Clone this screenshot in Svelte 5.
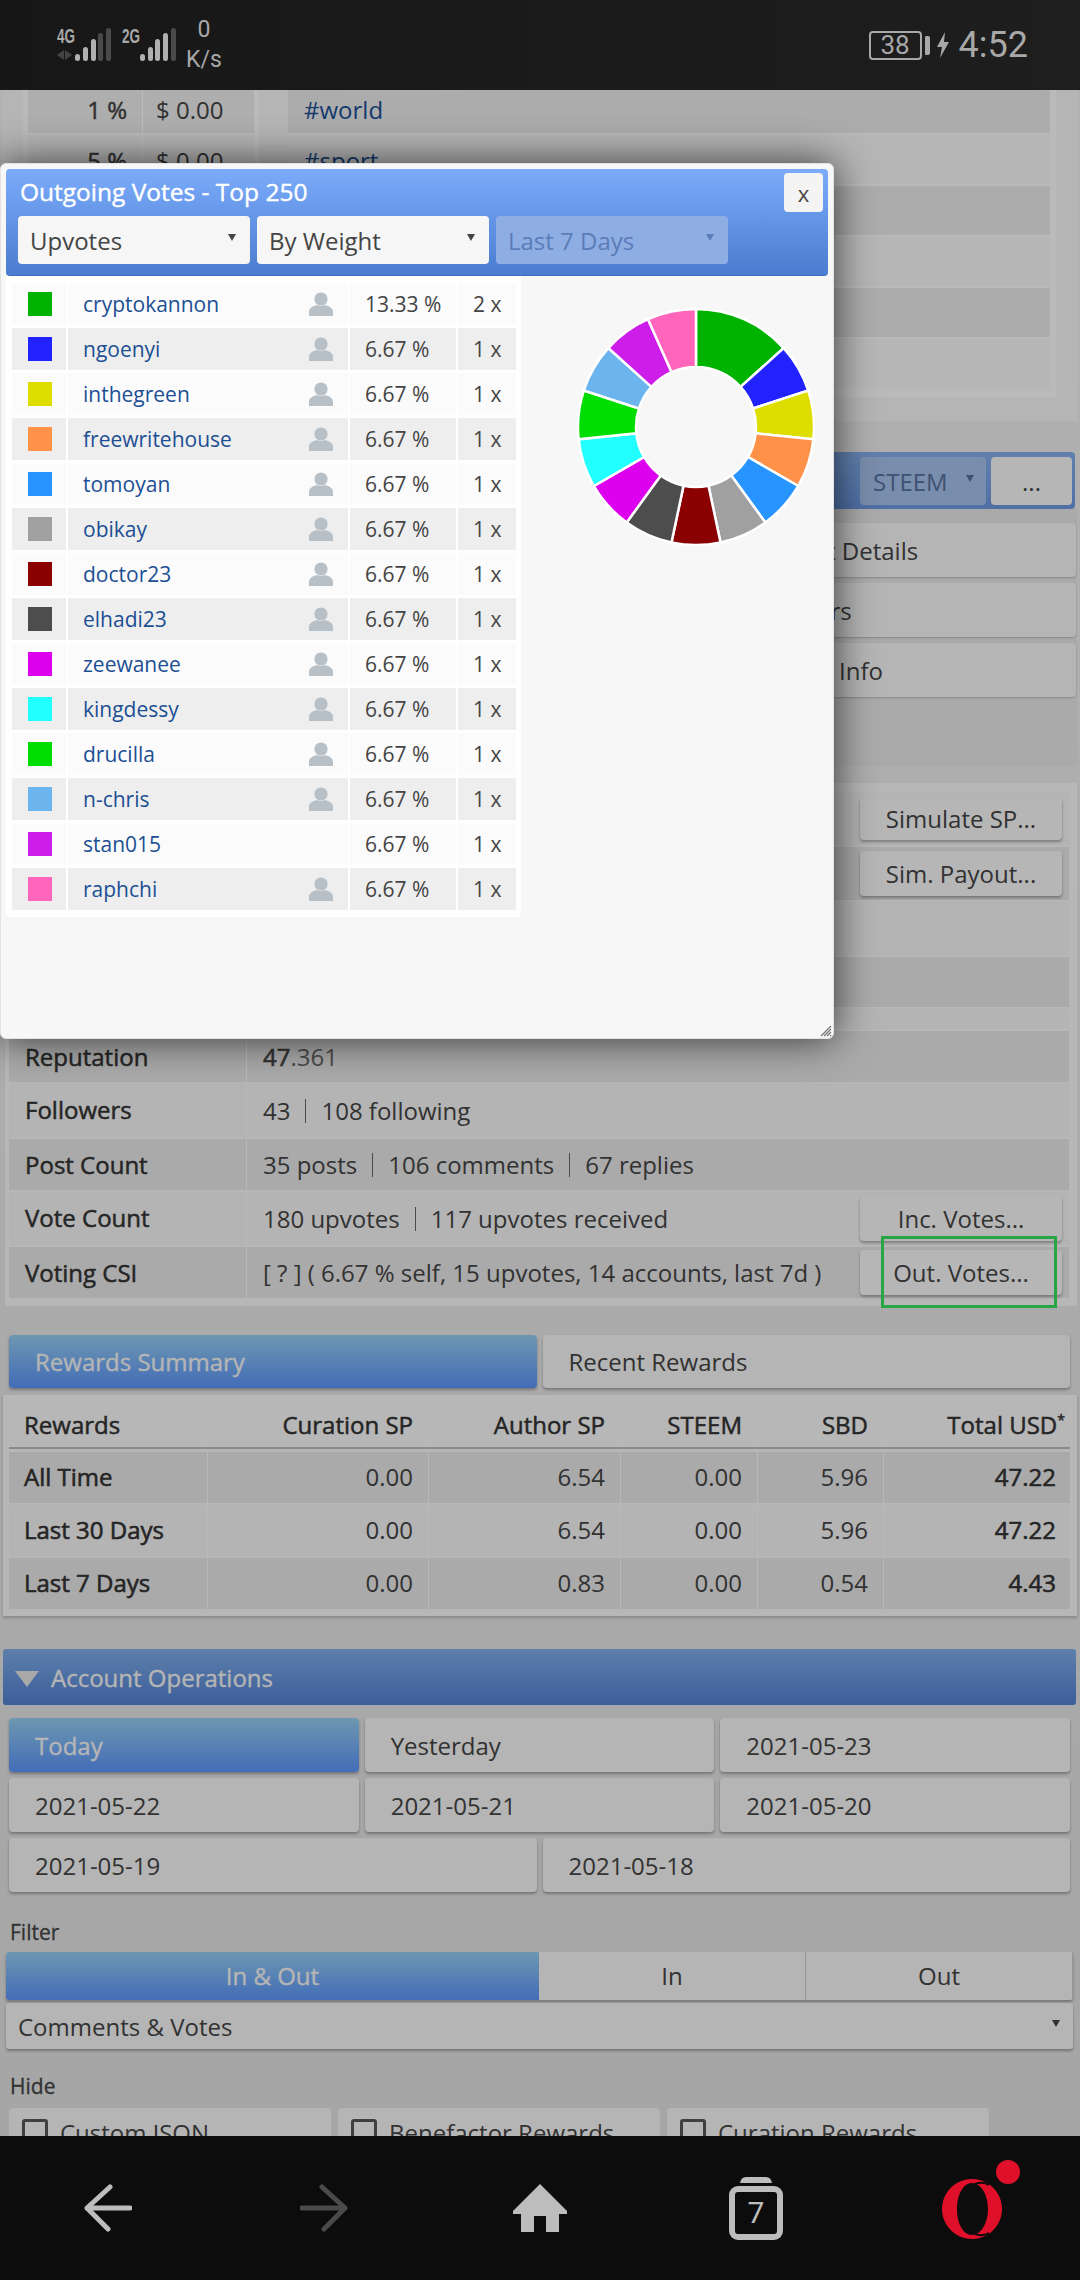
<script>
    const votes = [
        { name: 'cryptokannon', color: '#00b300', pct: '13.33 %', n: 2, user: true },
        { name: 'ngoenyi', color: '#2222ff', pct: '6.67 %', n: 1, user: true },
        { name: 'inthegreen', color: '#dddd00', pct: '6.67 %', n: 1, user: true },
        { name: 'freewritehouse', color: '#ff9148', pct: '6.67 %', n: 1, user: true },
        { name: 'tomoyan', color: '#2894ff', pct: '6.67 %', n: 1, user: true },
        { name: 'obikay', color: '#a0a0a0', pct: '6.67 %', n: 1, user: true },
        { name: 'doctor23', color: '#8b0000', pct: '6.67 %', n: 1, user: true },
        { name: 'elhadi23', color: '#4d4d4d', pct: '6.67 %', n: 1, user: true },
        { name: 'zeewanee', color: '#dd00ee', pct: '6.67 %', n: 1, user: true },
        { name: 'kingdessy', color: '#22ffff', pct: '6.67 %', n: 1, user: true },
        { name: 'drucilla', color: '#00dd00', pct: '6.67 %', n: 1, user: true },
        { name: 'n-chris', color: '#6cb4ee', pct: '6.67 %', n: 1, user: true },
        { name: 'stan015', color: '#cc1ee8', pct: '6.67 %', n: 1, user: false },
        { name: 'raphchi', color: '#ff66bb', pct: '6.67 %', n: 1, user: true }
    ];

    function slicePath(start, end) {
        const R = 118, r = 60, c = 120;
        const pt = (rad, deg) => {
            const a = (deg * Math.PI) / 180;
            return (c + rad * Math.sin(a)).toFixed(2) + ' ' + (c - rad * Math.cos(a)).toFixed(2);
        };
        return `M${pt(R, start)} A${R} ${R} 0 0 1 ${pt(R, end)} L${pt(r, end)} A${r} ${r} 0 0 0 ${pt(r, start)}Z`;
    }

    let acc = 0;
    const slices = votes.map((v) => {
        const start = acc;
        acc += v.n * 24;
        return { color: v.color, d: slicePath(start, acc) };
    });

    const tagRows = ['#world', '#sport', '', '', '', ''];
    const rewards = [
        ['All Time', '0.00', '6.54', '0.00', '5.96', '47.22'],
        ['Last 30 Days', '0.00', '6.54', '0.00', '5.96', '47.22'],
        ['Last 7 Days', '0.00', '0.83', '0.00', '0.54', '4.43']
    ];
    const days = ['Yesterday', '2021-05-23', '2021-05-22', '2021-05-21', '2021-05-20'];
</script>

<div class="screen">
    <header class="status">
        <svg class="signal" width="130" height="50" viewBox="0 0 130 50">
            <text x="0" y="22" class="net" textLength="18" lengthAdjust="spacingAndGlyphs">4G</text>
            <path d="M0 34l7-5v10zM8 29l7 5-7 5z" fill="#444" />
            <rect x="18" y="33" width="5" height="7" rx="2.5" fill="#b0b0b0" />
            <rect x="26" y="26" width="5" height="14" rx="2.5" fill="#b0b0b0" />
            <rect x="34" y="18" width="5" height="22" rx="2.5" fill="#b0b0b0" />
            <rect x="41" y="12" width="5" height="28" rx="2.5" fill="#4a4a4a" />
            <rect x="49" y="7" width="5" height="33" rx="2.5" fill="#4a4a4a" />
            <text x="65" y="22" class="net" textLength="18" lengthAdjust="spacingAndGlyphs">2G</text>
            <rect x="83" y="33" width="5" height="7" rx="2.5" fill="#b0b0b0" />
            <rect x="91" y="26" width="5" height="14" rx="2.5" fill="#b0b0b0" />
            <rect x="98" y="18" width="5" height="22" rx="2.5" fill="#b0b0b0" />
            <rect x="106" y="12" width="5" height="28" rx="2.5" fill="#b0b0b0" />
            <rect x="114" y="7" width="5" height="33" rx="2.5" fill="#4a4a4a" />
        </svg>
        <div class="speed"><span>0</span><span>K/s</span></div>
        <div class="battery"><span class="batt-cell">38</span><span class="tip"></span></div>
        <svg class="bolt" width="12" height="26" viewBox="0 0 12 26"><path d="M8 0L0 15h5L3 26l9-16H7z" fill="#a8a8a8" /></svg>
        <span class="clock">4:52</span>
    </header>

    <main class="page">
        <div class="scroll">
            <section class="top-panel">
                <div class="fee-table">
                    <div class="fee-row dark"><span class="fee-pct">1 %</span><span class="fee-val">$ 0.00</span></div>
                    <div class="fee-row"><span class="fee-pct">5 %</span><span class="fee-val">$ 0.00</span></div>
                </div>
                <div class="tag-panel">
                    {#each tagRows as tag, i}
                        <div class="tag-row" class:dark={i % 2 === 0}><span class="link">{tag}</span></div>
                    {/each}
                </div>
            </section>

            <div class="blue-bar">
                <span class="sel-dim">STEEM<i class="arrow"></i></span>
                <button class="more">...</button>
            </div>
            <section class="menu-panel">
                <button class="menu-btn">Account Details</button>
                <button class="menu-btn">Followers</button>
                <button class="menu-btn">Witness Info</button>
            </section>

            <section class="info-panel">
                <div class="info-row h53"><span class="lab"></span><div class="val"><button class="side s1">Simulate SP...</button></div></div>
                <div class="info-row h53 dark"><span class="lab"></span><div class="val"><button class="side s2">Sim. Payout...</button></div></div>
                <div class="info-row h53"><span class="lab"></span><div class="val"></div></div>
                <div class="info-row h50 dark"><span class="lab"></span><div class="val"></div></div>
                <div class="info-row h20"><span class="lab"></span><div class="val"></div></div>
                <div class="info-row h51 dark"><span class="lab">Reputation</span><div class="val"><b>47</b><span class="frac">.361</span></div></div>
                <div class="info-row h53"><span class="lab">Followers</span><div class="val">43<i class="sep"></i>108 following</div></div>
                <div class="info-row h51 dark"><span class="lab">Post Count</span><div class="val">35 posts<i class="sep"></i>106 comments<i class="sep"></i>67 replies</div></div>
                <div class="info-row h53"><span class="lab">Vote Count</span><div class="val">180 upvotes<i class="sep"></i>117 upvotes received<button class="side s3">Inc. Votes...</button></div></div>
                <div class="info-row h51 dark"><span class="lab">Voting CSI</span><div class="val">[ ? ] ( 6.67 % self, 15 upvotes, 14 accounts, last 7d )<button class="side s3">Out. Votes...</button></div></div>
            </section>

            <div class="tabs">
                <button class="btn active">Rewards Summary</button>
                <button class="btn">Recent Rewards</button>
            </div>

            <section class="reward-panel">
                <div class="rw head">
                    <span>Rewards</span><span>Curation SP</span><span>Author SP</span><span>STEEM</span><span>SBD</span><span>Total USD<sup>*</sup></span>
                </div>
                {#each rewards as row, i}
                    <div class="rw" class:dark={i !== 1}>
                        {#each row as cell, j}
                            <span class:strong={j === 0 || j === 5}>{cell}</span>
                        {/each}
                    </div>
                {/each}
            </section>

            <div class="ops-bar"><i class="tri"></i>Account Operations</div>

            <div class="days">
                <button class="btn active">Today</button>
                {#each days as d}<button class="btn">{d}</button>{/each}
            </div>
            <div class="days two">
                <button class="btn">2021-05-19</button>
                <button class="btn">2021-05-18</button>
            </div>

            <div class="cap filter">Filter</div>
            <div class="seg">
                <span class="seg-on">In &amp; Out</span><span>In</span><span>Out</span>
            </div>
            <div class="wide-select">Comments &amp; Votes<i class="arrow"></i></div>
            <div class="cap hide">Hide</div>
            <div class="checks">
                <div class="check"><i class="box"></i>Custom JSON</div>
                <div class="check"><i class="box"></i>Benefactor Rewards</div>
                <div class="check"><i class="box"></i>Curation Rewards</div>
            </div>
        </div>

        <div class="overlay"></div>
        <div class="mark"></div>

        <div class="modal">
            <div class="modal-head">
                <div class="title-row">
                    <span class="title">Outgoing Votes - Top 250</span>
                    <button class="close">x</button>
                </div>
                <div class="selects">
                    <span class="sel">Upvotes<i class="arrow"></i></span>
                    <span class="sel">By Weight<i class="arrow"></i></span>
                    <span class="sel off">Last 7 Days<i class="arrow"></i></span>
                </div>
            </div>
            <div class="modal-body">
                <div class="vote-table">
                    {#each votes as v, i}
                        <div class="vote-row" class:even={i % 2 === 1}>
                            <span class="cell swatch-cell"><i class="swatch" style="background:{v.color}"></i></span>
                            <span class="cell name-cell">
                                <span class="link">{v.name}</span>
                                {#if v.user}
                                    <svg class="person" width="24" height="24" viewBox="0 0 24 24">
                                        <circle cx="12" cy="7" r="6.6" fill="#b7bfc7" />
                                        <path d="M0 24v-4c0-4 4-6 8-7 2.400 1.200 5.600 1.200 8 0 4 1 8 3 8 7v4z" fill="#b7bfc7" />
                                    </svg>
                                {/if}
                            </span>
                            <span class="cell pct-cell">{v.pct}</span>
                            <span class="cell cnt-cell">{v.n} x</span>
                        </div>
                    {/each}
                </div>
                <svg class="donut" width="240" height="240" viewBox="0 0 240 240">
                    {#each slices as s}
                        <path d={s.d} fill={s.color} stroke="#fff" stroke-width="2.5" />
                    {/each}
                </svg>
            </div>
            <svg class="grip" width="12" height="12" viewBox="0 0 12 12">
                <path d="M1 11L11 1M4 11l7-7M7 11l4-4M10 11l1-1" stroke="#777" stroke-width="1.2" />
            </svg>
        </div>
    </main>

    <nav class="navbar">
        <div class="nav-item">
            <svg width="48" height="48" viewBox="0 0 48 48"><path d="M26 3L3 24l21 21M3 24h43" fill="none" stroke="#bdbdbd" stroke-width="5" stroke-linecap="round" stroke-linejoin="round" /></svg>
        </div>
        <div class="nav-item">
            <svg width="48" height="48" viewBox="0 0 48 48"><path d="M22 3l23 21-21 21M45 24H2" fill="none" stroke="#4a4a4a" stroke-width="5" stroke-linecap="round" stroke-linejoin="round" /></svg>
        </div>
        <div class="nav-item">
            <svg width="54" height="48" viewBox="0 0 54 48"><path d="M27 0L54 27 54 30H46V48H33V32H21V48H8V30H0V27z" fill="#bdbdbd" /></svg>
        </div>
        <div class="nav-item">
            <svg width="54" height="64" viewBox="0 0 54 64">
                <path d="M11 7q1-6 6-6h20q5 0 6 6z" fill="#bdbdbd" />
                <rect x="3" y="13" width="48" height="48" rx="6" fill="none" stroke="#bdbdbd" stroke-width="6" />
            </svg>
            <span class="tab-count">7</span>
        </div>
        <div class="nav-item">
            <svg class="opera" width="120" height="100" viewBox="0 0 120 100">
                <circle cx="96" cy="25" r="12" fill="#e0102a" />
                <path fill-rule="evenodd" fill="#e0102a" d="M60 32a30 30 0 1 0 .01 0zM60 36c-9 0-15 12-15 26s6 26 15 26 16-12 16-26-7-26-16-26z" />
                <path d="M63 37q8-3 14 1M63 87q8 3 14-1" fill="none" stroke="#0c0c0c" stroke-width="2" />
            </svg>
        </div>
    </nav>
</div>

<style>
    :global(body) {
        margin: 0;
        font-family: "Open Sans", "Liberation Sans", sans-serif;
        color: #444;
    }

    button {
        font: inherit;
        color: inherit;
        border: none;
        margin: 0;
    }

    i {
        font-style: normal;
    }

    .screen {
        width: 1080px;
        height: 2280px;
        display: flex;
        flex-direction: column;
        overflow: hidden;
    }

    /* status bar */
    .status {
        height: 90px;
        flex: none;
        display: flex;
        align-items: center;
        padding: 0 52px 0 57px;
        box-sizing: border-box;
        background: linear-gradient(90deg, #171717, #1e1e1e);
        color: #a8a8a8;
        font-family: Roboto, sans-serif;
    }

    .signal {
        margin-top: 2px;
        flex: none;
    }

    .net {
        font: 700 20px "Liberation Sans", sans-serif;
        fill: #a8a8a8;
    }

    .speed {
        display: flex;
        flex-direction: column;
        align-items: center;
        width: 40px;
        margin-left: -3px;
        font-size: 23px;
        line-height: 30px;
    }

    .battery {
        display: flex;
        align-items: center;
        margin-left: auto;
        gap: 3px;
    }

    .batt-cell {
        width: 49px;
        height: 25px;
        border: 2px solid #a8a8a8;
        border-radius: 4px;
        font-size: 26px;
        line-height: 25px;
        text-align: center;
    }

    .tip {
        width: 5px;
        height: 19px;
        background: #a8a8a8;
        border-radius: 1px 2px 2px 1px;
    }

    .bolt {
        margin: 0 10px 0 7px;
    }

    .clock {
        font-size: 36px;
        line-height: 40px;
    }

    /* page content */
    .page {
        position: relative;
        flex: none;
        height: 2046px;
        overflow: hidden;
        background: linear-gradient(#f0f0f0, #e0e0e0);
    }

    .scroll {
        margin-top: -6px;
        font-size: 24px;
    }

    .link {
        color: #1c4f94;
    }

    .top-panel {
        height: 337px;
        margin: 0 2px 0 3px;
        padding: 0 0 0 20px;
        background: #f4f4f4;
        display: flex;
        box-sizing: border-box;
    }

    .fee-table {
        width: 236px;
        height: 300px;
        padding: 0 5px;
        box-sizing: border-box;
        background: #fbfbfb;
    }

    .fee-row {
        height: 49px;
        margin-bottom: 2px;
        display: grid;
        grid-template-columns: 115px 110px;
        line-height: 52px;
        background: #f6f6f6;
    }

    .fee-row.dark {
        background: #ebebeb;
    }

    .fee-pct {
        text-align: right;
        padding-right: 15px;
        -webkit-text-stroke: .5px currentColor;
        border-right: 1px solid #fff;
    }

    .fee-val {
        padding-left: 13px;
    }

    .tag-panel {
        width: 768px;
        height: 313px;
        margin-left: 29px;
        padding-right: 6px;
        box-sizing: border-box;
        background: #fbfbfb;
    }

    .tag-row {
        height: 49px;
        margin-bottom: 2px;
        padding-left: 16px;
        line-height: 52px;
        background: #f6f6f6;
    }

    .tag-row.dark {
        background: #e8e8e8;
    }

    .blue-bar {
        height: 57px;
        margin: 31px 5px 0 5px;
        padding: 5px 3px 4px 0;
        box-sizing: border-box;
        display: flex;
        justify-content: flex-end;
        gap: 5px;
        background: linear-gradient(#84aeec, #6c96e0);
        border-radius: 4px;
    }

    .sel-dim {
        width: 126px;
        display: flex;
        align-items: center;
        justify-content: space-between;
        padding: 0 12px 0 13px;
        box-sizing: border-box;
        background: #a4bee8;
        color: #566f9c;
        border-radius: 4px;
    }

    .more {
        width: 81px;
        background: #f6f6f6;
        border-radius: 4px;
    }

    .arrow {
        display: inline-block;
        width: 0;
        height: 0;
        margin-bottom: 6px;
        border-left: 4px solid transparent;
        border-right: 4px solid transparent;
        border-top: 7px solid currentColor;
    }

    .menu-panel {
        height: 257px;
        margin: 0 3px 0 5px;
        padding: 14px 1px 0 726px;
        box-sizing: border-box;
        background: #e6e6e6;
        display: flex;
        flex-direction: column;
        gap: 6px;
    }

    .menu-btn {
        height: 54px;
        padding: 0 14px;
        text-align: left;
        background: #f4f4f4;
        border-radius: 4px;
        box-shadow: 0 1px 2px rgba(0, 0, 0, .2);
    }

    .info-panel {
        margin: 17px 3px 0 5px;
        padding: 9px 8px 8px 4px;
        background: #f7f7f7;
        display: flex;
        flex-direction: column;
        gap: 2px;
    }

    .info-row {
        display: flex;
        gap: 2px;
        background: #f3f3f3;
    }

    .info-row.dark {
        background: #e6e6e6;
    }

    .h53 { height: 53px; }
    .h50 { height: 50px; }
    .h51 { height: 51px; }
    .h20 { height: 20px; }

    .lab {
        width: 238px;
        flex: none;
        padding-left: 16px;
        box-sizing: border-box;
        -webkit-text-stroke: .5px currentColor;
        color: #333;
        line-height: 52px;
        border-right: 1px solid #fafafa;
    }

    .val {
        flex: 1;
        display: flex;
        align-items: center;
        padding: 0 7px 0 14px;
        white-space: pre;
    }

    .val b {
        font-weight: 400;
        -webkit-text-stroke: .6px currentColor;
    }

    .frac {
        color: #666;
    }

    .sep {
        display: inline-block;
        width: 1px;
        height: 24px;
        margin: 0 15px;
        background: #666;
    }

    .side {
        width: 202px;
        margin-left: auto;
        background: #f6f6f6;
        border-radius: 4px;
        box-shadow: 0 2px 3px rgba(0, 0, 0, .3);
    }

    .s1 { height: 42px; }
    .s2 { height: 45px; }
    .s3 { height: 45px; }

    .tabs {
        margin: 29px 10px 0 9px;
        display: grid;
        grid-template-columns: 1fr 1fr;
        gap: 6px;
    }

    .btn {
        height: 53px;
        padding: 0 26px;
        text-align: left;
        background: #f4f4f4;
        border-radius: 4px;
        box-shadow: 0 2px 3px rgba(0, 0, 0, .3);
    }

    .btn.active {
        color: #f4f4f4;
        -webkit-text-stroke: .3px currentColor;
        background: linear-gradient(#94ccef, #5b93f8);
    }

    .reward-panel {
        margin: 7px 3px 0 3px;
        padding: 7px 7px 5px 6px;
        background: #f7f7f7;
        box-shadow: 0 2px 3px rgba(0, 0, 0, .2);
    }

    .rw {
        display: grid;
        grid-template-columns: 199px 219px 190px 135px 124px 186px;
        column-gap: 2px;
        height: 51px;
        margin-bottom: 2px;
        background: #f3f3f3;
        line-height: 50px;
    }

    .rw.dark {
        background: #e6e6e6;
    }

    .rw span {
        text-align: right;
        padding: 0 15px;
        border-right: 1px solid #fafafa;
    }

    .rw span:first-child {
        text-align: left;
    }

    .rw .strong {
        -webkit-text-stroke: .6px currentColor;
        color: #333;
    }

    .rw.head {
        height: 45px;
        margin-bottom: 3px;
        -webkit-text-stroke: .5px currentColor;
        color: #333;
        background: #f7f7f7;
        border-bottom: 2px solid #bbb;
        line-height: 45px;
    }

    sup {
        font-size: 14px;
        line-height: 0;
        margin-right: -9px;
    }

    .ops-bar {
        height: 56px;
        margin: 33px 4px 0 3px;
        display: flex;
        align-items: center;
        color: #f4f4f4;
        -webkit-text-stroke: .3px currentColor;
        background: linear-gradient(#7eace8, #527fd0);
        border-radius: 3px;
    }

    .tri {
        width: 0;
        height: 0;
        margin: 3px 12px 0 12px;
        border-left: 12px solid transparent;
        border-right: 12px solid transparent;
        border-top: 16px solid #e4e4e4;
    }

    .days {
        margin: 13px 10px 0 9px;
        display: grid;
        grid-template-columns: repeat(3, 1fr);
        gap: 6px;
    }

    .days.two {
        margin-top: 6px;
        grid-template-columns: 1fr 1fr;
    }

    .days .btn {
        height: 54px;
    }

    .cap {
        margin-left: 10px;
        font-size: 21px;
        -webkit-text-stroke: .3px currentColor;
        line-height: 28px;
    }

    .filter {
        padding-top: 26px;
    }

    .hide {
        padding-top: 23px;
    }

    .seg {
        height: 48px;
        margin: 6px 7px 0 6px;
        display: grid;
        grid-template-columns: 533px 267px 267px;
        line-height: 48px;
        text-align: center;
        background: #f4f4f4;
        box-shadow: 0 2px 3px rgba(0, 0, 0, .3);
        border-radius: 3px;
    }

    .seg span + span {
        border-right: 1px solid #ccc;
    }

    .seg-on {
        color: #f4f4f4;
        -webkit-text-stroke: .3px currentColor;
        background: linear-gradient(#94ccef, #5b93f8);
        border-radius: 3px 0 0 3px;
    }

    .wide-select {
        height: 46px;
        margin: 3px 7px 0 6px;
        padding: 0 13px 0 12px;
        display: flex;
        align-items: center;
        justify-content: space-between;
        background: #f4f4f4;
        border-radius: 3px;
        box-shadow: 0 2px 3px rgba(0, 0, 0, .3);
    }

    .checks {
        margin: 8px 0 0 9px;
        display: flex;
        gap: 7px;
    }

    .check {
        width: 322px;
        height: 50px;
        padding: 8px 0 0 13px;
        box-sizing: border-box;
        display: flex;
        align-items: flex-start;
        gap: 12px;
        background: #f4f4f4;
        border-radius: 4px;
    }

    .box {
        width: 26px;
        height: 26px;
        margin-top: 3px;
        box-sizing: border-box;
        border: 3px solid #555;
        border-radius: 3px;
    }

    .overlay {
        position: absolute;
        inset: 0;
        background: rgba(0, 0, 0, .26);
    }

    .mark {
        position: absolute;
        left: 881px;
        top: 1146px;
        width: 170px;
        height: 66px;
        border: 3px solid #2aa545;
    }

    /* vote dialog */
    .modal {
        position: absolute;
        left: 0;
        top: 73px;
        width: 834px;
        height: 876px;
        padding: 5px;
        box-sizing: border-box;
        background: #f7f7f7;
        border: 1px solid #e2e2e2;
        border-radius: 6px;
        box-shadow: 0 0 40px rgba(0, 0, 0, .7);
    }

    .modal-head {
        height: 107px;
        padding: 4px 5px 0 12px;
        box-sizing: border-box;
        color: #fff;
        background: linear-gradient(#7cabfb, #4a7ccf);
        border-bottom: 1px solid #3f6fc0;
        border-radius: 4px;
    }

    .title-row {
        display: flex;
        justify-content: space-between;
        height: 43px;
    }

    .title {
        padding: 1px 0 0 2px;
        font-size: 24.5px;
        -webkit-text-stroke: .4px currentColor;
        line-height: 36px;
    }

    .close {
        width: 39px;
        height: 39px;
        padding: 0;
        font-size: 22px;
        color: #444;
        background: #f4f4f4;
        border-radius: 4px;
    }

    .selects {
        display: flex;
        gap: 7px;
    }

    .sel {
        width: 232px;
        height: 48px;
        padding: 0 14px 0 12px;
        box-sizing: border-box;
        display: flex;
        align-items: center;
        justify-content: space-between;
        font-size: 24px;
        color: #444;
        background: #f6f6f6;
        border-radius: 4px;
    }

    .sel.off {
        color: #5b7cb8;
        background: #8eaee3;
    }

    .modal-body {
        display: flex;
        align-items: flex-start;
    }

    .vote-table {
        width: 515px;
        padding: 7px 6px;
        box-sizing: border-box;
        display: flex;
        flex-direction: column;
        gap: 3px;
        background: #fff;
        border-radius: 0 0 4px 4px;
    }

    .vote-row {
        display: grid;
        grid-template-columns: 54px 280px 106px 58px;
        column-gap: 2px;
        height: 42px;
        font-size: 21px;
        line-height: 42px;
    }

    .cell {
        background: #fbfbfb;
    }

    .even .cell {
        background: #eeeeee;
    }

    .swatch-cell {
        display: flex;
        align-items: center;
        justify-content: center;
    }

    .swatch {
        width: 24px;
        height: 24px;
        margin-left: 2px;
    }

    .name-cell {
        display: flex;
        align-items: center;
        justify-content: space-between;
        padding: 0 15px;
    }

    .pct-cell {
        padding-left: 15px;
    }

    .cnt-cell {
        padding-left: 15px;
    }

    .donut {
        margin: 31px 0 0 55px;
    }

    .grip {
        position: absolute;
        right: 1px;
        bottom: 1px;
    }

    /* bottom bar */
    .navbar {
        flex: 1;
        display: grid;
        grid-template-columns: repeat(5, 1fr);
        background: #0c0c0c;
    }

    .nav-item {
        position: relative;
        display: flex;
        align-items: center;
        justify-content: center;
    }

    .tab-count {
        position: absolute;
        left: 0;
        right: 0;
        top: 60px;
        text-align: center;
        font: 30px/34px Roboto, sans-serif;
        color: #bdbdbd;
    }

    .opera {
        margin-top: -22px;
    }
</style>
